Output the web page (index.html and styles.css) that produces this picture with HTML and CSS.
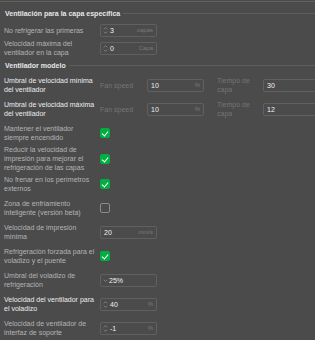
FILE: index.html
```html
<!DOCTYPE html>
<html lang="es">
<head>
    <meta charset="UTF-8">
    <title>Ventilación</title>
    <link rel="stylesheet" href="styles.css">
</head>
<body>
    <div class="panel">
        <div class="group-title first"><span>Ventilación para la capa específica</span></div>

        <div class="row tight">
            <div class="label">No refrigerar las primeras</div>
            <div class="field">
                <svg class="spin" viewBox="0 0 5 9"><path d="M0.8 3.4 L2.5 1.6 L4.2 3.4 M0.8 5.6 L2.5 7.4 L4.2 5.6"/></svg>
                <span class="val">3</span><span class="unit">capas</span>
            </div>
        </div>
        <div class="row tight">
            <div class="label">Velocidad máxima del<br>ventilador en la capa</div>
            <div class="field">
                <svg class="spin" viewBox="0 0 5 9"><path d="M0.8 3.4 L2.5 1.6 L4.2 3.4 M0.8 5.6 L2.5 7.4 L4.2 5.6"/></svg>
                <span class="val">0</span><span class="unit">Capa</span>
            </div>
        </div>

        <div class="group-title"><span>Ventilador modelo</span></div>

        <div class="row">
            <div class="label bright">Umbral de velocidad mínima<br>del ventilador</div>
            <div class="sub-label">Fan speed</div>
            <div class="field plain"><span class="val">10</span><span class="unit">%</span></div>
            <div class="sub-label second">Tiempo de<br>capa</div>
            <div class="field plain"><span class="val">30</span></div>
        </div>
        <div class="row">
            <div class="label bright">Umbral de velocidad máxima<br>del ventilador</div>
            <div class="sub-label">Fan speed</div>
            <div class="field plain"><span class="val">10</span><span class="unit">%</span></div>
            <div class="sub-label second">Tiempo de<br>capa</div>
            <div class="field plain"><span class="val">12</span></div>
        </div>

        <div class="row">
            <div class="label">Mantener el ventilador<br>siempre encendido</div>
            <div class="check on"></div>
        </div>
        <div class="row">
            <div class="label">Reducir la velocidad de<br>impresión para mejorar el<br>refrigeración de las capas</div>
            <div class="check on"></div>
        </div>
        <div class="row">
            <div class="label">No frenar en los perímetros<br>externos</div>
            <div class="check on"></div>
        </div>
        <div class="row">
            <div class="label">Zona de enfriamiento<br>inteligente (versión beta)</div>
            <div class="check"></div>
        </div>
        <div class="row">
            <div class="label">Velocidad de impresión<br>mínima</div>
            <div class="field plain"><span class="val">20</span><span class="unit">mm/s</span></div>
        </div>
        <div class="row">
            <div class="label">Refrigeración forzada para el<br>voladizo y el puente</div>
            <div class="check on"></div>
        </div>
        <div class="row">
            <div class="label">Umbral del voladizo de<br>refrigeración</div>
            <div class="field">
                <svg class="drop" viewBox="0 0 5 9"><path d="M0.8 3.8 L2.5 5.4 L4.2 3.8"/></svg>
                <span class="val">25%</span>
            </div>
        </div>
        <div class="row">
            <div class="label bright">Velocidad del ventilador para<br>el voladizo</div>
            <div class="field">
                <svg class="spin" viewBox="0 0 5 9"><path d="M0.8 3.4 L2.5 1.6 L4.2 3.4 M0.8 5.6 L2.5 7.4 L4.2 5.6"/></svg>
                <span class="val">40</span><span class="unit">%</span>
            </div>
        </div>
        <div class="row">
            <div class="label">Velocidad de ventilador de<br>interfaz de soporte</div>
            <div class="field">
                <svg class="spin" viewBox="0 0 5 9"><path d="M0.8 3.4 L2.5 1.6 L4.2 3.4 M0.8 5.6 L2.5 7.4 L4.2 5.6"/></svg>
                <span class="val">-1</span><span class="unit">%</span>
            </div>
        </div>
    </div>
</body>
</html>
```

FILE: styles.css
```css
* {
    margin: 0;
    padding: 0;
    box-sizing: border-box;
}

body {
    font-family: 'Liberation Sans', Arial, sans-serif;
    font-size: 7px;
    line-height: 9px;
    background: #4b4b4c;
    color: #b4b4b4;
    width: 315px;
    height: 340px;
    overflow: hidden;
}

.panel {
    margin-top: 1px;
    border-top: 1px solid #626262;
    padding-left: 4px;
}

/* Section headings with a rule to the right */
.group-title {
    display: flex;
    align-items: center;
    gap: 3px;
    height: 16px;
    font-weight: bold;
    color: #e6e6e6;
    padding-left: 1px;
}

.group-title.first {
    height: 19px;
    padding-top: 3px;
}

.group-title::after {
    content: '';
    flex: 1;
    height: 1px;
    background: #5d5d5d;
}

.row {
    display: flex;
    align-items: center;
    min-height: 24px;
}

.row.tight {
    min-height: 18px;
}

.label {
    width: 96px;
    flex-shrink: 0;
    white-space: nowrap;
}

.label.bright {
    color: #ececec;
}

.sub-label {
    width: 47px;
    color: #747474;
    flex-shrink: 0;
}

.sub-label.second {
    width: 46px;
    margin-left: 13px;
}

.field {
    display: flex;
    align-items: center;
    width: 57px;
    height: 13px;
    border: 1px solid #606060;
    border-radius: 2px;
    padding: 0 3px 0 2px;
    flex-shrink: 0;
}

.field.plain {
    padding-left: 3px;
}

.val {
    color: #f2f2f2;
}

.unit {
    margin-left: auto;
    font-size: 6px;
    color: #7a7a7a;
}

.spin,
.drop {
    width: 5px;
    height: 9px;
    margin-right: 2px;
    fill: none;
    stroke: #8c8c8c;
    stroke-width: 0.8;
}

.drop {
    margin-right: 1px;
}

.check {
    width: 10px;
    height: 10px;
    border: 1px solid #8a8a8a;
    border-radius: 2px;
}

.check.on {
    background: #00ae42;
    border-color: #00ae42;
    position: relative;
}

.check.on::after {
    content: '';
    position: absolute;
    left: 2px;
    top: 1px;
    width: 3px;
    height: 5px;
    border: solid #fff;
    border-width: 0 1.3px 1.3px 0;
    transform: rotate(40deg);
}
```
